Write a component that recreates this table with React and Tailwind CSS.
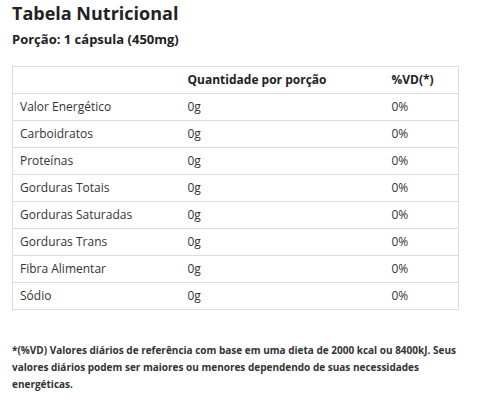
import React from 'react';

const rows = [
  'Valor Energético',
  'Carboidratos',
  'Proteínas',
  'Gorduras Totais',
  'Gorduras Saturadas',
  'Gorduras Trans',
  'Fibra Alimentar',
  'Sódio',
];

export default function App() {
  return (
    <div className="w-[486px] h-[403px] bg-white px-3 pt-[1px] font-['Open_Sans',sans-serif] text-[#222]">
      {/* Heading */}
      <h1 className="text-[18px] font-bold leading-[24px]">Tabela Nutricional</h1>
      <p className="mt-[5px] text-[13px] font-bold leading-[18px]">Porção: 1 cápsula (450mg)</p>

      {/* Table */}
      <table className="mt-[18px] w-[447px] border-collapse border border-[#dcdcdc] text-[12px] text-[#333]">
        <thead>
          <tr className="h-[27px] border-b border-[#dcdcdc]">
            <th className="w-[168px]"></th>
            <th className="w-[204px] pl-[7px] text-left font-bold text-[#222]">Quantidade por porção</th>
            <th className="pl-[7px] text-left font-bold text-[#222]">%VD(*)</th>
          </tr>
        </thead>
        <tbody>
          {rows.map((name) => (
            <tr key={name} className="h-[27px] border-b border-[#dcdcdc]">
              <td className="pl-[7px]">{name}</td>
              <td className="pl-[7px]">0g</td>
              <td className="pl-[7px]">0%</td>
            </tr>
          ))}
        </tbody>
      </table>

      {/* Footnote */}
      <p className="mt-[32px] w-[455px] text-[10px] font-bold leading-[17px] text-[#333]">
        *(%VD) Valores diários de referência com base em uma dieta de 2000 kcal ou 8400kJ. Seus valores diários podem ser maiores ou menores dependendo de suas necessidades energéticas.
      </p>
    </div>
  );
}
